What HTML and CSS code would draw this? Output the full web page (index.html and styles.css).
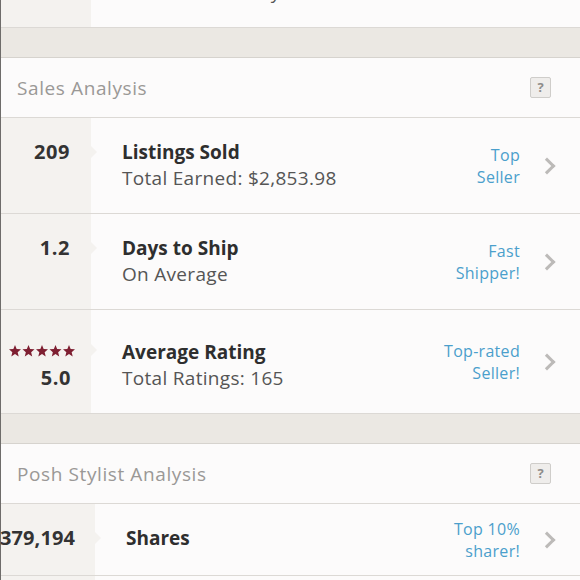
FILE: index.html
```
<!DOCTYPE html>
<html lang="en">
<head>
    <meta charset="UTF-8">
    <meta name="viewport" content="width=device-width, initial-scale=1.0">
    <title>Closet Insights</title>
    <link rel="stylesheet" href="styles.css">
</head>
<body>
    <div class="page">
        <!-- previous section, scrolled off the top -->
        <div class="stat-row first">
            <div class="stat"><span class="num">12</span></div>
            <div class="info">
                <div class="title">Response Time</div>
                <div class="sub">In less than a day</div>
            </div>
            <div class="badge"></div>
        </div>

        <div class="band"></div>

        <!-- Sales Analysis -->
        <div class="section-head">
            <span>Sales Analysis</span>
            <span class="help">?</span>
        </div>

        <div class="stat-row">
            <div class="stat"><span class="num">209</span></div>
            <div class="info">
                <div class="title">Listings Sold</div>
                <div class="sub">Total Earned: $2,853.98</div>
            </div>
            <div class="badge">Top<br>Seller</div>
            <span class="chev"></span>
        </div>

        <div class="stat-row">
            <div class="stat"><span class="num">1.2</span></div>
            <div class="info">
                <div class="title">Days to Ship</div>
                <div class="sub">On Average</div>
            </div>
            <div class="badge">Fast<br>Shipper!</div>
            <span class="chev"></span>
        </div>

        <div class="stat-row rating">
            <div class="stat">
                <svg class="stars" width="66" height="12" viewBox="0 0 66 12">
                    <defs>
                        <polygon id="star" points="6,0 7.65,4.03 12,4.35 8.66,7.17 9.7,11.4 6,9.1 2.3,11.4 3.34,7.17 0,4.35 4.35,4.03"/>
                    </defs>
                    <use href="#star"/>
                    <use href="#star" x="13.5"/>
                    <use href="#star" x="27"/>
                    <use href="#star" x="40.5"/>
                    <use href="#star" x="54"/>
                </svg>
                <span class="num">5.0</span>
            </div>
            <div class="info">
                <div class="title">Average Rating</div>
                <div class="sub">Total Ratings: 165</div>
            </div>
            <div class="badge">Top-rated<br>Seller!</div>
            <span class="chev"></span>
        </div>

        <div class="band"></div>

        <!-- Posh Stylist Analysis -->
        <div class="section-head">
            <span>Posh Stylist Analysis</span>
            <span class="help">?</span>
        </div>

        <div class="stat-row single">
            <div class="stat wide"><span class="num">379,194</span></div>
            <div class="info">
                <div class="title">Shares</div>
            </div>
            <div class="badge">Top 10%<br>sharer!</div>
            <span class="chev"></span>
        </div>

        <div class="stat-row single">
            <div class="stat wide"><span class="num">1,024</span></div>
            <div class="info">
                <div class="title">Followers</div>
            </div>
            <div class="badge"></div>
            <span class="chev"></span>
        </div>
    </div>
</body>
</html>
```

FILE: styles.css
```
body {
    margin: 0;
    background-color: #fcfbfb;
    font-family: "Open Sans", Lato, sans-serif;
    color: #333;
    overflow: hidden;
}
.page {
    border-left: 1px solid #6e6c6a;
    min-height: 580px;
}
.stat-row {
    display: flex;
    align-items: stretch;
    border-bottom: 1px solid #dcd9d5;
    position: relative;
}
.stat-row.first {
    margin-top: -68px;
}
.stat {
    width: 90px;
    flex: none;
    background-color: #f4f2ef;
    display: flex;
    flex-direction: column;
    align-items: flex-end;
    padding: 21px 21px 0 0;
    box-sizing: border-box;
    position: relative;
}
.stat::after {
    content: "";
    position: absolute;
    right: -6px;
    top: 28px;
    border-top: 6px solid transparent;
    border-bottom: 6px solid transparent;
    border-left: 6px solid #f4f2ef;
}
.stat.wide {
    width: 94px;
    padding-right: 20px;
}
.num {
    font-size: 20px;
    font-weight: bold;
    line-height: 26px;
    letter-spacing: 0.6px;
    color: #333;
}
.wide .num {
    letter-spacing: 0.1px;
}
.rating .stat {
    padding: 35px 20px 0 0;
}
.rating .stat::after {
    top: 34px;
}
.stars {
    fill: #7e1f31;
    margin: 0 -4px 8px 0;
}
.info {
    flex: 1;
    padding: 21px 0 21px 31px;
}
.rating .info {
    padding-top: 29px;
}
.single .info {
    padding: 21px 0 24px 31px;
}
.title {
    font-size: 19px;
    font-weight: bold;
    line-height: 26px;
    color: #2e2e2e;
}
.sub {
    font-size: 19px;
    line-height: 27px;
    letter-spacing: 0.3px;
    color: #555;
}
.badge {
    font-size: 16px;
    line-height: 22px;
    letter-spacing: 0.3px;
    color: #4b9fcc;
    text-align: right;
    align-self: center;
    padding-right: 60px;
}
.chev {
    position: absolute;
    right: 27px;
    top: 50%;
    width: 9px;
    height: 9px;
    margin-top: -6px;
    border-top: 3px solid #bcbab8;
    border-right: 3px solid #bcbab8;
    transform: rotate(45deg);
}
.band {
    height: 29px;
    background-color: #ebe8e3;
    border-bottom: 1px solid #d6d3ce;
}
.section-head {
    display: flex;
    align-items: center;
    justify-content: space-between;
    height: 60px;
    padding: 0 29px 0 16px;
    font-size: 19px;
    letter-spacing: 0.6px;
    color: #9a9896;
    border-bottom: 1px solid #dcd9d5;
    box-sizing: border-box;
}
.help {
    width: 19px;
    height: 19px;
    border: 1px solid #cfcdca;
    border-radius: 2px;
    background-color: #efedeb;
    color: #8e8c8a;
    font-size: 13px;
    font-weight: bold;
    letter-spacing: 0;
    text-align: center;
    line-height: 19px;
}
```
